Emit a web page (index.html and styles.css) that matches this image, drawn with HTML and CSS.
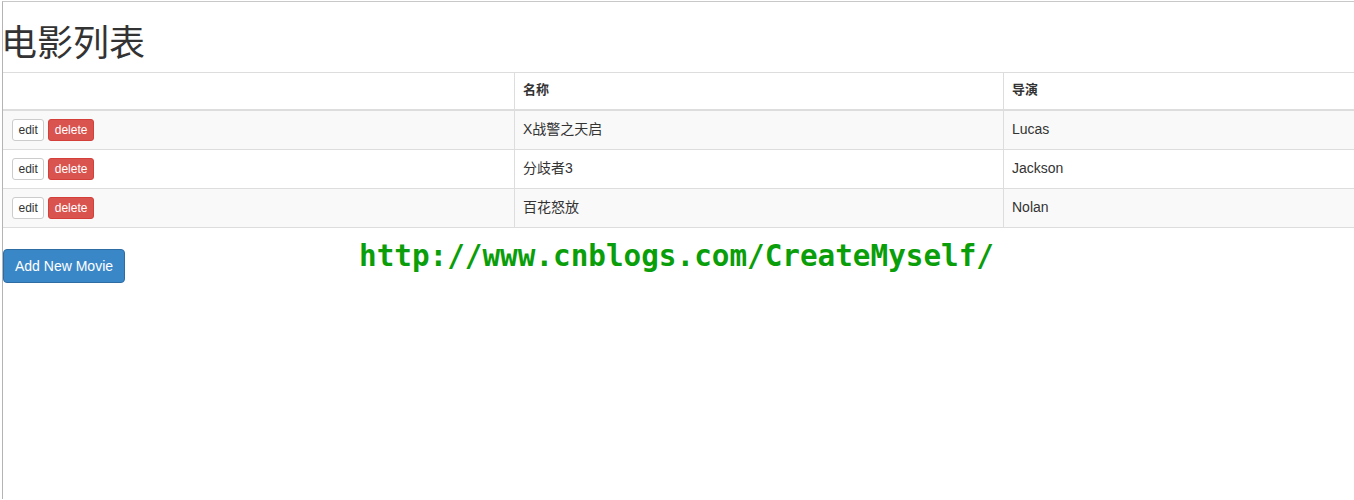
FILE: index.html
```html
<!DOCTYPE html>
<html lang="zh">
<head>
<meta charset="utf-8">
<title>电影列表</title>
<link rel="stylesheet" href="styles.css">
</head>
<body>
<div class="frame">
  <h1 class="title">电影列表</h1>
  <table class="movies">
    <thead>
      <tr>
        <th class="col-actions"></th>
        <th class="col-name">名称</th>
        <th class="col-director">导演</th>
      </tr>
    </thead>
    <tbody>
      <tr class="odd">
        <td><button class="btn btn-xs btn-default">edit</button> <button class="btn btn-xs btn-danger">delete</button></td>
        <td>X战警之天启</td>
        <td>Lucas</td>
      </tr>
      <tr>
        <td><button class="btn btn-xs btn-default">edit</button> <button class="btn btn-xs btn-danger">delete</button></td>
        <td>分歧者3</td>
        <td>Jackson</td>
      </tr>
      <tr class="odd">
        <td><button class="btn btn-xs btn-default">edit</button> <button class="btn btn-xs btn-danger">delete</button></td>
        <td>百花怒放</td>
        <td>Nolan</td>
      </tr>
    </tbody>
  </table>
  <button class="btn btn-primary">Add New Movie</button>
  <div class="watermark">http://www.cnblogs.com/CreateMyself/</div>
</div>
</body>
</html>
```
FILE: styles.css
```css
html, body {
  margin: 0;
  padding: 0;
  background: #fff;
}
body {
  font-family: "Liberation Sans", Arial, "Noto Sans CJK SC", sans-serif;
  font-size: 14px;
  line-height: 1.42857;
  color: #333;
}
.frame {
  position: relative;
  margin-left: 2px;
  margin-top: 1px;
  border-left: 1px solid #b4b4b4;
  border-top: 1px solid #c8c8c8;
  min-height: 497px;
}
.title {
  margin: 22px 0 8px -2px;
  font-family: "Liberation Sans", "Noto Sans CJK SC", sans-serif;
  font-size: 36px;
  font-weight: 400;
  line-height: 1.1;
  color: #333;
}
.movies {
  width: 100%;
  border-collapse: collapse;
  border-spacing: 0;
  margin-bottom: 21px;
  border-top: 1px solid #ddd;
}
.movies th,
.movies td {
  padding: 8px;
  text-align: left;
  vertical-align: middle;
  border-top: 1px solid #ddd;
  border-left: 1px solid #ddd;
}
.movies th:first-child,
.movies td:first-child {
  border-left: none;
  padding-left: 9px;
}
.movies th {
  font-weight: bold;
  font-size: 13px;
  border-bottom: 2px solid #ddd;
  height: 20px;
}
.movies tbody tr:last-child td {
  border-bottom: 1px solid #ddd;
}
.movies tr.odd td {
  background: #f9f9f9;
}
.col-actions { width: 494px; }
.col-name { width: 472px; }
.btn {
  display: inline-block;
  margin: 0;
  font-family: "Liberation Sans", Arial, sans-serif;
  cursor: pointer;
  border: 1px solid transparent;
  border-radius: 4px;
  white-space: nowrap;
  vertical-align: middle;
}
.btn-xs {
  padding: 1px 5.5px;
  font-size: 12px;
  line-height: 1.5;
  border-radius: 3px;
}
.btn-default {
  background: #fff;
  color: #333;
  border-color: #ccc;
}
.btn-danger {
  background: #d9534f;
  color: #fff;
  border-color: #d43f3a;
}
.btn-primary {
  padding: 6px 11px;
  font-size: 14px;
  line-height: 20px;
  background: #3a87c8;
  color: #fff;
  border-color: #2e6da4;
}
.watermark {
  position: absolute;
  left: 356px;
  top: 234px;
  font-family: "DejaVu Sans Mono", "Liberation Mono", monospace;
  font-weight: bold;
  font-size: 29.3px;
  color: #0a9e0a;
}
```
